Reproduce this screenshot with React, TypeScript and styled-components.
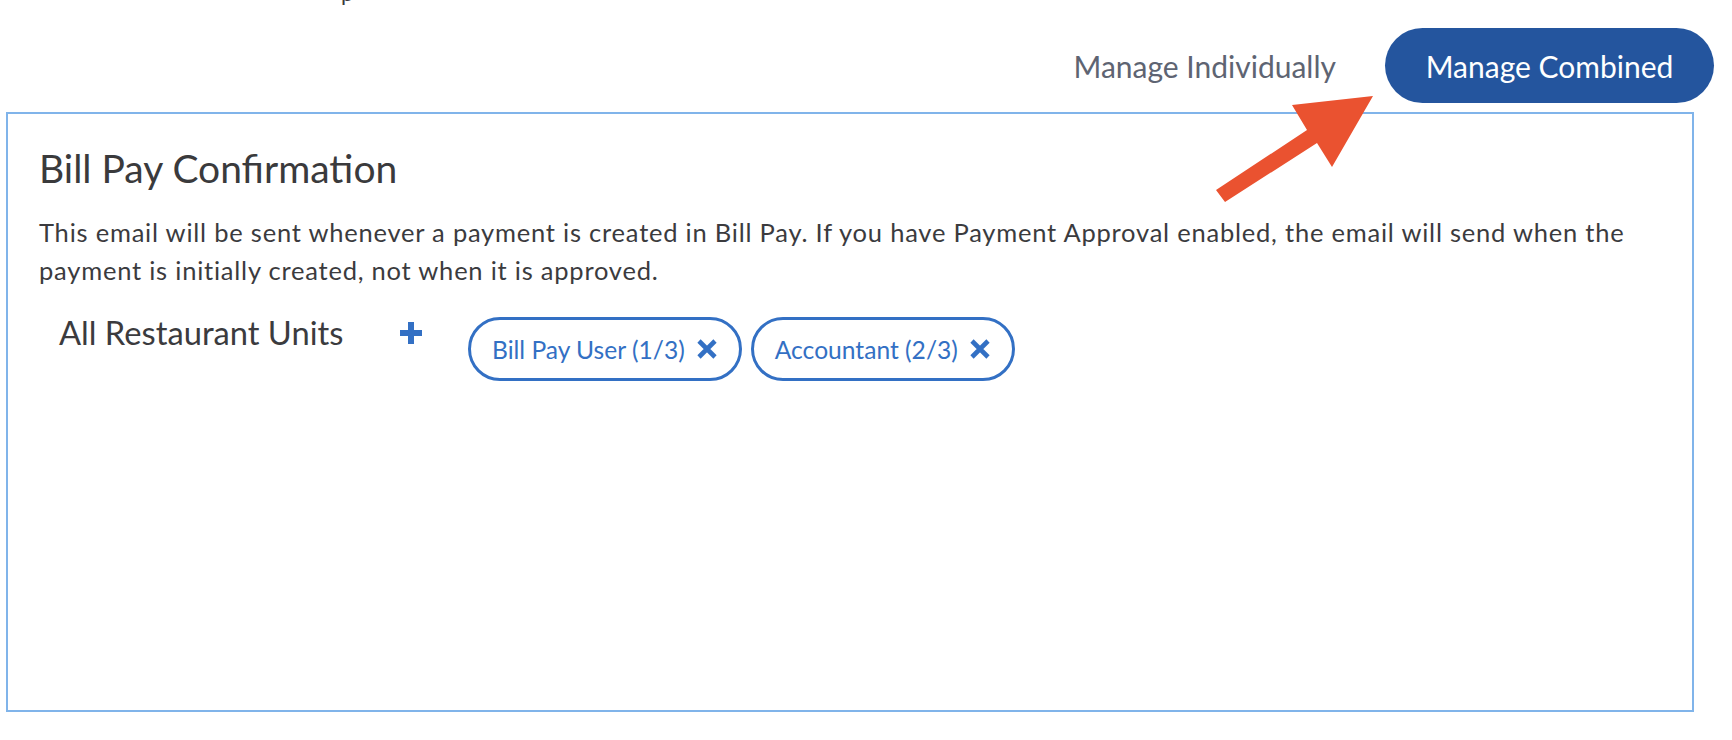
import React from 'react';
import styled, { createGlobalStyle } from 'styled-components';

const GlobalStyle = createGlobalStyle`
  html, body {
    margin: 0;
    padding: 0;
    background: #ffffff;
  }
  body {
    font-family: Lato, "Noto Sans", "Liberation Sans", sans-serif;
    color: #3b3b3e;
  }
`;

const Page = styled.div`
  position: relative;
  width: 1732px;
  height: 740px;
  overflow: hidden;
`;

// the last line of the text above, scrolled almost out of view
const ClippedLine = styled.div`
  height: 5px;
  overflow: hidden;
  padding-left: 341px;
  position: absolute;
  top: 0;
  left: 0;
`;

const ClippedText = styled.span`
  display: block;
  font-size: 22px;
  line-height: 22px;
  margin-top: -18px;
  color: #3b3b3e;
`;

const TopBar = styled.div`
  display: flex;
  justify-content: flex-end;
  align-items: center;
  gap: 49px;
  padding: 28px 18px 0 0;
  margin-bottom: 9px;
`;

const LinkButton = styled.button`
  border: none;
  background: none;
  padding: 0;
  font-family: inherit;
  font-size: 30px;
  color: #5e6472;
  cursor: pointer;
`;

const PillButton = styled.button`
  width: 329px;
  height: 75px;
  border: none;
  border-radius: 38px;
  background: #24559e;
  color: #ffffff;
  font-family: inherit;
  font-size: 30px;
  cursor: pointer;
`;

const Panel = styled.section`
  box-sizing: border-box;
  margin-left: 6px;
  width: 1688px;
  height: 600px;
  border: 2px solid #80b4ea;
  padding: 31px 31px 0 31px;
`;

const Title = styled.h2`
  margin: 0;
  font-size: 39px;
  line-height: 46px;
  font-weight: 400;
  color: #3a3a3c;
`;

const Description = styled.p`
  margin: 22px 0 0 0;
  font-size: 25.5px;
  line-height: 38px;
  letter-spacing: 0.78px;
  color: #3b3b3e;
`;

const UnitRow = styled.div`
  display: flex;
  align-items: flex-start;
  margin-top: 25px;
  padding-left: 20px;
`;

const UnitLabel = styled.span`
  width: 341px;
  font-size: 32.7px;
  line-height: 38px;
  color: #3b3b3e;
`;

const AddButton = styled.button`
  display: flex;
  align-items: center;
  justify-content: center;
  width: 22px;
  height: 38px;
  padding: 0;
  border: none;
  background: none;
  color: #3370c4;
  cursor: pointer;
`;

const ChipList = styled.div`
  display: flex;
  gap: 9px;
  margin-left: 46px;
  margin-top: 3px;
`;

const Chip = styled.div`
  box-sizing: border-box;
  display: flex;
  align-items: center;
  gap: 11px;
  height: 64px;
  padding: 0 21px 0 21px;
  border: 3px solid #3370c4;
  border-radius: 32px;
  color: #3370c4;
  font-size: 24.6px;
`;

const RemoveIcon = styled.svg`
  width: 22px;
  height: 22px;
  flex: none;
`;

const Arrow = styled.svg`
  position: absolute;
  left: 1210px;
  top: 90px;
`;

const PlusIcon = () => (
  <svg width="22" height="22" viewBox="0 0 22 22">
    <rect x="8" y="0" width="6" height="22" fill="currentColor" />
    <rect x="0" y="8" width="22" height="6" fill="currentColor" />
  </svg>
);

const chips = ['Bill Pay User (1/3)', 'Accountant (2/3)'];

export default function App() {
  return (
    <Page>
      <GlobalStyle />
      <ClippedLine>
        <ClippedText>p</ClippedText>
      </ClippedLine>
      <TopBar>
        <LinkButton>Manage Individually</LinkButton>
        <PillButton>Manage Combined</PillButton>
      </TopBar>
      <Panel>
        <Title>Bill Pay Confirmation</Title>
        <Description>
          This email will be sent whenever a payment is created in Bill Pay. If you have Payment Approval enabled, the email will send when the payment is initially created, not when it is approved.
        </Description>
        <UnitRow>
          <UnitLabel>All Restaurant Units</UnitLabel>
          <AddButton aria-label="add role">
            <PlusIcon />
          </AddButton>
          <ChipList>
            {chips.map((c) => (
              <Chip key={c}>
                <span>{c}</span>
                <RemoveIcon viewBox="0 0 22 22">
                  <path d="M3 3 L19 19 M19 3 L3 19" stroke="currentColor" strokeWidth="4.6" fill="none" />
                </RemoveIcon>
              </Chip>
            ))}
          </ChipList>
        </UnitRow>
      </Panel>
      <Arrow width="170" height="120" viewBox="0 0 170 120">
        <polygon
          points="163,6 82,15 97,40 6,100 15,112 107,53 122,77"
          fill="#ea5230"
        />
      </Arrow>
    </Page>
  );
}
